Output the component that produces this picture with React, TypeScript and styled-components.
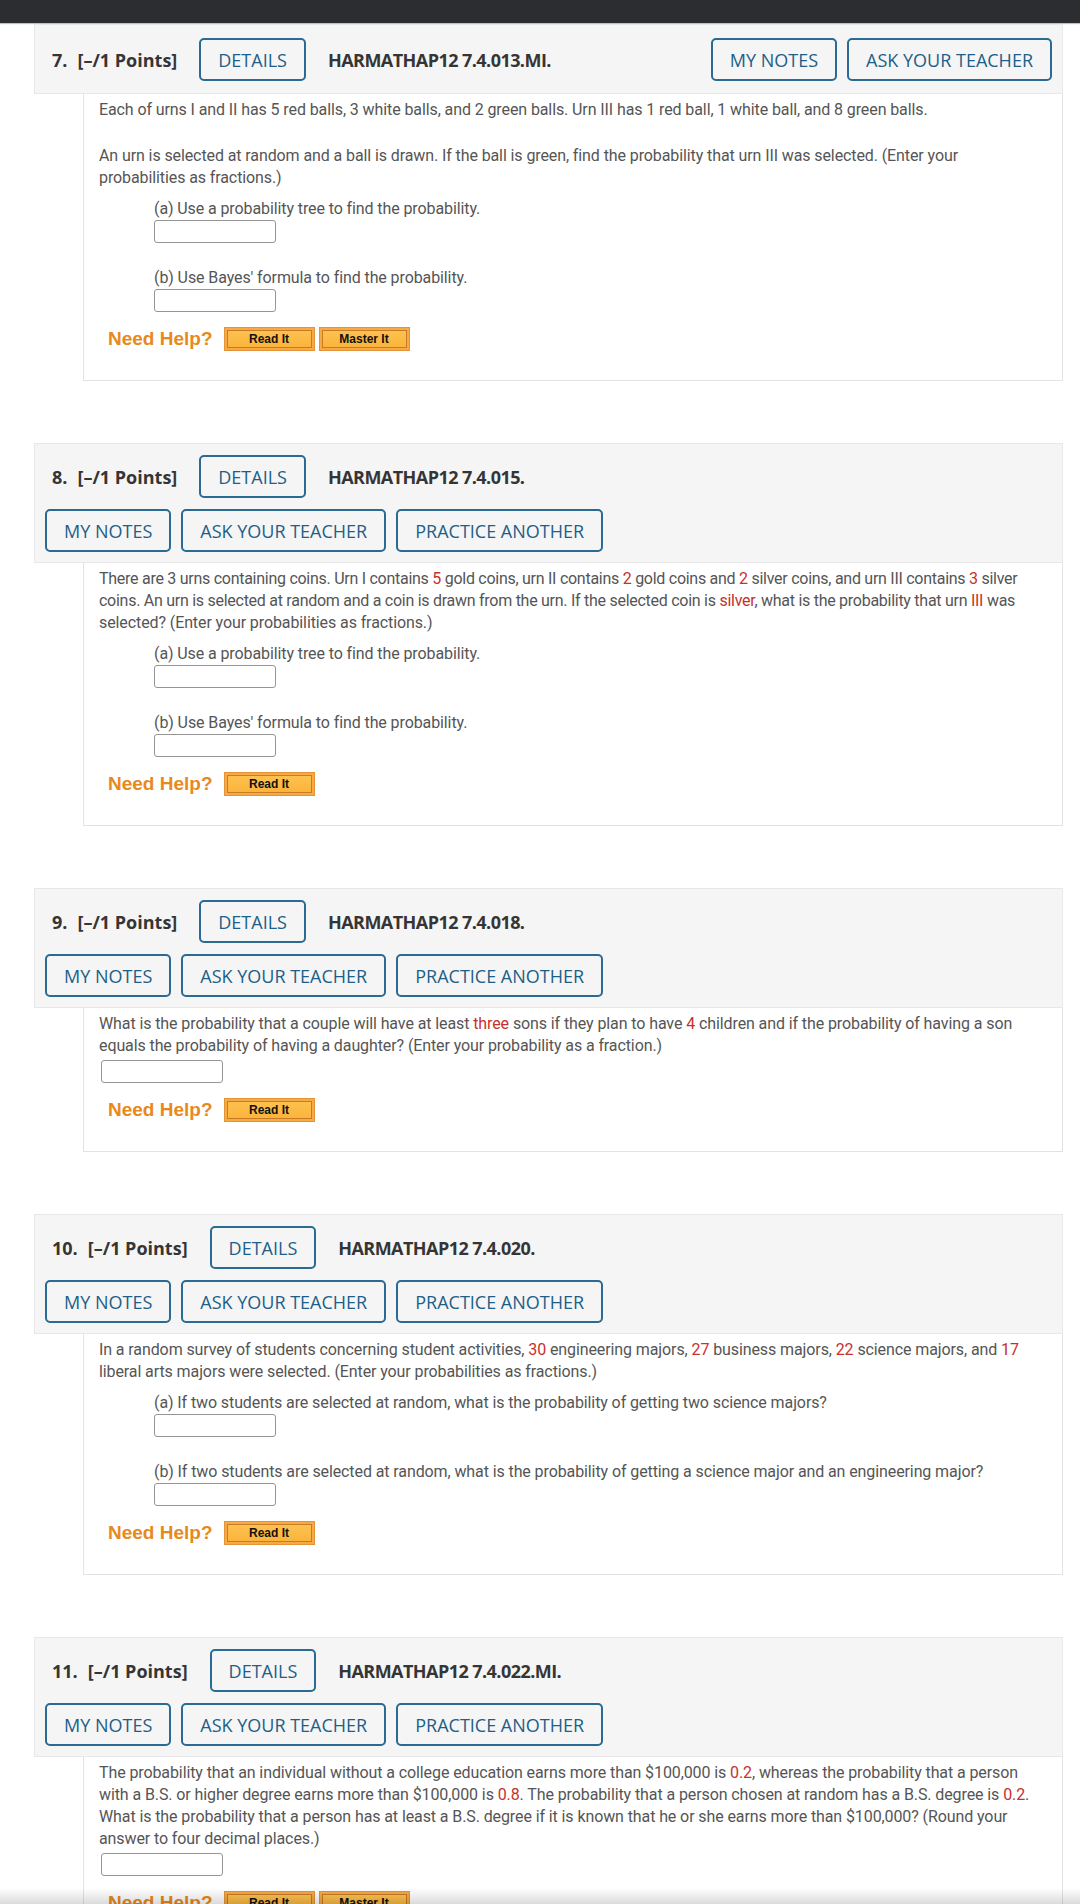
import React from "react";
import styled, { createGlobalStyle } from "styled-components";

const Global = createGlobalStyle`
  html, body { margin: 0; padding: 0; background: #ffffff; }
  body { font-family: Roboto, "Liberation Sans", sans-serif; }
  * { box-sizing: border-box; }
`;

const Page = styled.div`
  width: 1080px;
  min-height: 1904px;
  background: #ffffff;
  overflow: hidden;
`;

const TopBar = styled.div`
  height: 23px;
  background: #2c2d31;
  box-shadow: 0 1px 1px rgba(0, 0, 0, 0.25);
`;

const List = styled.main`
  display: flex;
  flex-direction: column;
  gap: 62px;
  padding: 1px 17px 0 34px;
`;

const Question = styled.section`
  display: flex;
  flex-direction: column;
`;

const Header = styled.div<{ $compact?: boolean }>`
  background: #f5f5f5;
  border: 1px solid #e8e8e8;
  padding: ${(p) => (p.$compact ? "13px 10px 12px" : "11px 10px 10px")};
  display: flex;
  flex-direction: column;
  gap: 11px;
`;

const TitleRow = styled.div`
  display: flex;
  align-items: center;
`;

const Title = styled.span`
  font: 700 18px "Open Sans", "Liberation Sans", sans-serif;
  color: #353535;
  margin: 0 22px 0 7px;
  white-space: nowrap;
`;

const Num = styled.span`
  margin-right: 10px;
`;

const Code = styled.span`
  font: 700 18px "Open Sans", "Liberation Sans", sans-serif;
  letter-spacing: -0.55px;
  color: #353535;
  margin-left: 22px;
  white-space: nowrap;
`;

const ButtonGroup = styled.div<{ $right?: boolean }>`
  display: flex;
  gap: 10px;
  margin-left: ${(p) => (p.$right ? "auto" : "0")};
`;

const OutlineButton = styled.button`
  height: 43px;
  padding: 0 17px;
  border: 2px solid #2a6b93;
  border-radius: 5px;
  background: transparent;
  font: 400 18px/1 "Open Sans", "Liberation Sans", sans-serif;
  color: #1d5f88;
  text-transform: uppercase;
  white-space: nowrap;
  cursor: pointer;
`;

const Body = styled.div`
  margin-left: 49px;
  border: 1px solid #e3e3e3;
  border-top: none;
  background: #ffffff;
  padding: 5px 14px 29px 15px;
  font: 400 16px/22px Roboto, "Liberation Sans", sans-serif;
  letter-spacing: -0.1px;
  color: #555555;
`;

const Para = styled.p<{ $gap?: boolean }>`
  margin: 0 0 ${(p) => (p.$gap ? "24px" : "0")};
`;

const Line = styled.span<{ $tight?: boolean }>`
  display: block;
  white-space: nowrap;
  letter-spacing: ${(p) => (p.$tight ? "-0.27px" : "-0.1px")};
`;

const Hi = styled.span`
  color: #c8302c;
`;

const Parts = styled.div`
  margin: 9px 0 8px 55px;
  display: flex;
  flex-direction: column;
  gap: 24px;
`;

const Part = styled.div`
  display: flex;
  flex-direction: column;
  align-items: flex-start;
`;

const AnswerBox = styled.input<{ $inline?: boolean }>`
  width: 122px;
  height: 23px;
  border: 1px solid #959595;
  border-radius: 3px;
  background: #ffffff;
  margin: ${(p) => (p.$inline ? "3px 0 0 2px" : "0")};
  display: block;
`;

const HelpRow = styled.div`
  display: flex;
  align-items: center;
  gap: 4px;
  margin-top: 15px;
  padding-left: 9px;
`;

const HelpText = styled.span`
  font: 700 19px "Liberation Sans", Arial, sans-serif;
  letter-spacing: 0;
  color: #e8891d;
  margin-right: 7px;
`;

const HelpButton = styled.button`
  width: 91px;
  height: 24px;
  padding: 2px;
  background: #f6aa44;
  border: 1px solid #e4933a;
  display: flex;
  cursor: pointer;
`;

const HelpFace = styled.span`
  flex: 1;
  border: 1px solid #c97a25;
  background: linear-gradient(#fdc14f, #fbb43c);
  font: 700 12px "Liberation Sans", Arial, sans-serif;
  letter-spacing: 0;
  color: #111111;
  display: flex;
  align-items: center;
  justify-content: center;
`;

const BottomShade = styled.div`
  position: fixed;
  left: 0;
  right: 0;
  bottom: 0;
  height: 16px;
  background: linear-gradient(rgba(0, 0, 0, 0), rgba(0, 0, 0, 0.14));
  pointer-events: none;
`;

type HeadProps = { num: number; code: string; compact?: boolean };

const QuestionHeader: React.FC<HeadProps> = ({ num, code, compact }) => (
  <Header $compact={compact}>
    <TitleRow>
      <Title>
        <Num>{num}.</Num>[–/1 Points]
      </Title>
      <OutlineButton>Details</OutlineButton>
      <Code>{code}</Code>
      {compact && (
        <ButtonGroup $right>
          <OutlineButton>My Notes</OutlineButton>
          <OutlineButton>Ask Your Teacher</OutlineButton>
        </ButtonGroup>
      )}
    </TitleRow>
    {!compact && (
      <ButtonGroup>
        <OutlineButton>My Notes</OutlineButton>
        <OutlineButton>Ask Your Teacher</OutlineButton>
        <OutlineButton>Practice Another</OutlineButton>
      </ButtonGroup>
    )}
  </Header>
);

const NeedHelp: React.FC<{ master?: boolean }> = ({ master }) => (
  <HelpRow>
    <HelpText>Need Help?</HelpText>
    <HelpButton>
      <HelpFace>Read It</HelpFace>
    </HelpButton>
    {master && (
      <HelpButton>
        <HelpFace>Master It</HelpFace>
      </HelpButton>
    )}
  </HelpRow>
);

const PartList: React.FC<{ items: string[] }> = ({ items }) => (
  <Parts>
    {items.map((t) => (
      <Part key={t}>
        <span>{t}</span>
        <AnswerBox />
      </Part>
    ))}
  </Parts>
);

export default function App() {
  return (
    <Page>
      <Global />
      <TopBar />
      <List>
        <Question>
          <QuestionHeader num={7} code="HARMATHAP12 7.4.013.MI." compact />
          <Body>
            <Para $gap>
              Each of urns I and II has 5 red balls, 3 white balls, and 2 green balls. Urn III has 1
              red ball, 1 white ball, and 8 green balls.
            </Para>
            <Para>
              An urn is selected at random and a ball is drawn. If the ball is green, find the
              probability that urn III was selected. (Enter your probabilities as fractions.)
            </Para>
            <PartList
              items={[
                "(a) Use a probability tree to find the probability.",
                "(b) Use Bayes' formula to find the probability.",
              ]}
            />
            <NeedHelp master />
          </Body>
        </Question>

        <Question>
          <QuestionHeader num={8} code="HARMATHAP12 7.4.015." />
          <Body>
            <Para>
              <Line $tight>
                There are 3 urns containing coins. Urn I contains <Hi>5</Hi> gold coins, urn II
                contains <Hi>2</Hi> gold coins and <Hi>2</Hi> silver coins, and urn III contains{" "}
                <Hi>3</Hi> silver
              </Line>
              <Line $tight>
                coins. An urn is selected at random and a coin is drawn from the urn. If the
                selected coin is <Hi>silver</Hi>, what is the probability that urn <Hi>III</Hi> was
              </Line>
              <Line>selected? (Enter your probabilities as fractions.)</Line>
            </Para>
            <PartList
              items={[
                "(a) Use a probability tree to find the probability.",
                "(b) Use Bayes' formula to find the probability.",
              ]}
            />
            <NeedHelp />
          </Body>
        </Question>

        <Question>
          <QuestionHeader num={9} code="HARMATHAP12 7.4.018." />
          <Body>
            <Para>
              What is the probability that a couple will have at least <Hi>three</Hi> sons if they
              plan to have <Hi>4</Hi> children and if the probability of having a son equals the
              probability of having a daughter? (Enter your probability as a fraction.)
            </Para>
            <AnswerBox $inline />
            <NeedHelp />
          </Body>
        </Question>

        <Question>
          <QuestionHeader num={10} code="HARMATHAP12 7.4.020." />
          <Body>
            <Para>
              In a random survey of students concerning student activities, <Hi>30</Hi> engineering
              majors, <Hi>27</Hi> business majors, <Hi>22</Hi> science majors, and <Hi>17</Hi>{" "}
              liberal arts majors were selected. (Enter your probabilities as fractions.)
            </Para>
            <PartList
              items={[
                "(a) If two students are selected at random, what is the probability of getting two science majors?",
                "(b) If two students are selected at random, what is the probability of getting a science major and an engineering major?",
              ]}
            />
            <NeedHelp />
          </Body>
        </Question>

        <Question>
          <QuestionHeader num={11} code="HARMATHAP12 7.4.022.MI." />
          <Body>
            <Para>
              The probability that an individual without a college education earns more than
              $100,000 is <Hi>0.2</Hi>, whereas the probability that a person with a B.S. or higher
              degree earns more than $100,000 is <Hi>0.8</Hi>. The probability that a person chosen
              at random has a B.S. degree is <Hi>0.2</Hi>. What is the probability that a person
              has at least a B.S. degree if it is known that he or she earns more than $100,000?
              (Round your answer to four decimal places.)
            </Para>
            <AnswerBox $inline />
            <NeedHelp master />
          </Body>
        </Question>
      </List>
      <BottomShade />
    </Page>
  );
}
